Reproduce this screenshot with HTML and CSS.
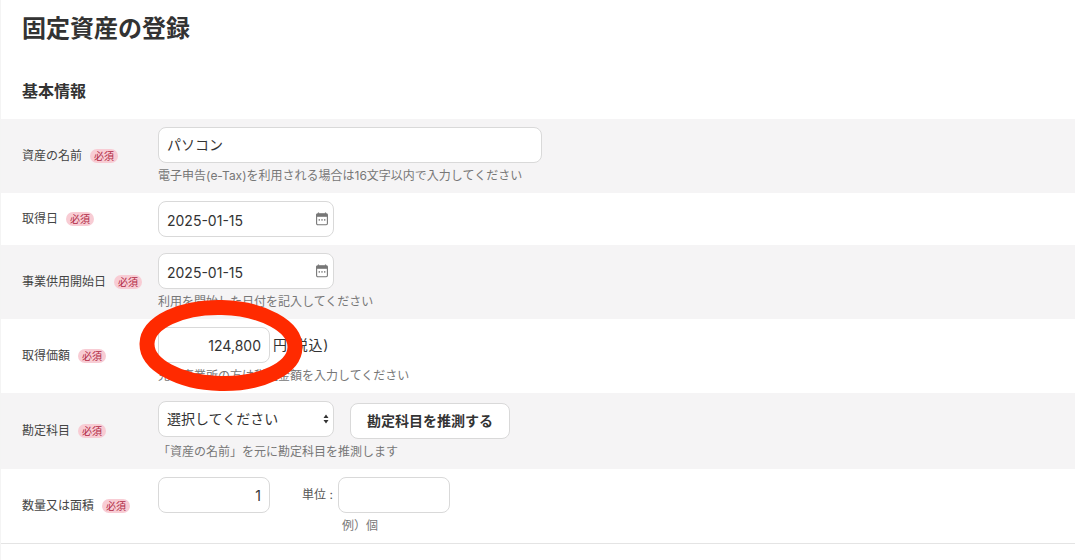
FILE: index.html
```html
<!DOCTYPE html>
<html lang="ja">
<head>
<meta charset="utf-8">
<title>固定資産の登録</title>
<link rel="stylesheet" href="styles.css">
</head>
<body>
<main class="page">
  <h1 class="title">固定資産の登録</h1>
  <h2 class="section">基本情報</h2>
  <form class="form">
    <div class="row shade">
      <div class="label">資産の名前<span class="badge">必須</span></div>
      <div class="field">
        <input class="input wide" type="text" value="パソコン">
        <p class="hint">電子申告(e-Tax)を利用される場合は16文字以内で入力してください</p>
      </div>
    </div>
    <div class="row compact">
      <div class="label">取得日<span class="badge">必須</span></div>
      <div class="field">
        <div class="date">
          <input class="input medium date-input" type="text" value="2025-01-15">
          <svg class="cal" viewBox="0 0 12 14" width="12" height="14"><path d="M2.5 0.5v2M9.5 0.5v2" stroke="#777" stroke-width="1.2" fill="none"/><rect x="0.6" y="1.8" width="10.8" height="11" rx="1.2" fill="#fff" stroke="#777" stroke-width="1.1"/><rect x="0.6" y="1.8" width="10.8" height="3" fill="#777"/><rect x="2.6" y="7.2" width="1.4" height="1.4" fill="#777"/><rect x="5.3" y="7.2" width="1.4" height="1.4" fill="#777"/><rect x="8" y="7.2" width="1.4" height="1.4" fill="#777"/></svg>
        </div>
      </div>
    </div>
    <div class="row shade">
      <div class="label">事業供用開始日<span class="badge">必須</span></div>
      <div class="field">
        <div class="date">
          <input class="input medium date-input" type="text" value="2025-01-15">
          <svg class="cal" viewBox="0 0 12 14" width="12" height="14"><path d="M2.5 0.5v2M9.5 0.5v2" stroke="#777" stroke-width="1.2" fill="none"/><rect x="0.6" y="1.8" width="10.8" height="11" rx="1.2" fill="#fff" stroke="#777" stroke-width="1.1"/><rect x="0.6" y="1.8" width="10.8" height="3" fill="#777"/><rect x="2.6" y="7.2" width="1.4" height="1.4" fill="#777"/><rect x="5.3" y="7.2" width="1.4" height="1.4" fill="#777"/><rect x="8" y="7.2" width="1.4" height="1.4" fill="#777"/></svg>
        </div>
        <p class="hint">利用を開始した日付を記入してください</p>
      </div>
    </div>
    <div class="row">
      <div class="label">取得価額<span class="badge">必須</span></div>
      <div class="field">
        <div class="inline">
          <input class="input small num" type="text" value="124,800">
          <span class="unit">円(税込)</span>
        </div>
        <p class="hint">免税事業所の方は税込金額を入力してください</p>
      </div>
    </div>
    <div class="row shade">
      <div class="label">勘定科目<span class="badge">必須</span></div>
      <div class="field">
        <div class="inline top">
          <div class="select-wrap">
            <select class="input medium select"><option>選択してください</option></select>
            <svg class="arrows" viewBox="0 0 6 10" width="6" height="10"><path d="M3 0.5L5.5 4H0.5zM3 9.5L0.5 6H5.5z" fill="#333"/></svg>
          </div>
          <button class="button" type="button">勘定科目を推測する</button>
        </div>
        <p class="hint">「資産の名前」を元に勘定科目を推測します</p>
      </div>
    </div>
    <div class="row ruled">
      <div class="label">数量又は面積<span class="badge">必須</span></div>
      <div class="field pair">
        <input class="input small num" type="text" value="1">
        <div class="unit-block">
          <div class="inline">
            <span class="unit-label">単位 :</span>
            <input class="input small" type="text">
          </div>
          <p class="hint indent">例）個</p>
        </div>
      </div>
    </div>
  </form>
  <svg class="circle" viewBox="0 0 170 97" width="170" height="97"><ellipse cx="85" cy="48.5" rx="74" ry="38" fill="none" stroke="#ff2a00" stroke-width="15" transform="rotate(1.5 85 48.5)"/></svg>
</main>
</body>
</html>
```

FILE: styles.css
```css
* { box-sizing: border-box; }

html, body { margin: 0; padding: 0; background: #fff; }

body {
  font-family: Inter, "Noto Sans CJK JP", sans-serif;
  color: #333;
  height: 560px;
  overflow: hidden;
}

.page { position: relative; border-left: 1px solid #f4f4f4; min-height: 560px; }

.title {
  margin: 0;
  padding: 11px 0 0 21px;
  font-size: 24px;
  line-height: 36px;
  font-weight: 700;
  color: #333;
}

.section {
  margin: 0;
  padding: 32px 0 0 21px;
  font-size: 16px;
  line-height: 24px;
  height: 72px;
  font-weight: 700;
  color: #333;
}

.row {
  display: flex;
  align-items: center;
  padding: 8px 0 8px 21px;
}

.shade { background: #f5f4f5; }
.compact { min-height: 52px; }
.ruled { border-bottom: 1px solid #e4e4e4; }

.label {
  width: 136px;
  flex: none;
  display: flex;
  align-items: center;
  font-size: 12px;
  line-height: 18px;
  color: #444;
}

.badge {
  display: inline-block;
  width: 28px;
  height: 14px;
  margin-left: 8px;
  border-radius: 7px;
  background: #f8ccd4;
  color: #b02a45;
  font-size: 10px;
  line-height: 14px;
  text-align: center;
}

.field { flex: none; }

.input {
  display: block;
  height: 36px;
  padding: 0 8px;
  border: 1px solid #d9d9d9;
  border-radius: 8px;
  background: #fff;
  color: #333;
  font: 14px/20px Inter, "Noto Sans CJK JP", sans-serif;
  outline: none;
}

.wide { width: 384px; padding-bottom: 2px; }
.medium { width: 176px; }
.small { width: 112px; }
.num { text-align: right; }
.date-input { padding-top: 2px; }

.date, .select-wrap { position: relative; width: 176px; }

.cal { position: absolute; right: 6px; top: 11px; }

.select { appearance: none; -webkit-appearance: none; }

.arrows { position: absolute; right: 5px; top: 13px; }

.inline { display: flex; align-items: center; }
.top { align-items: flex-start; }

.unit { margin-left: 3px; font-size: 14px; line-height: 18px; letter-spacing: 0.8px; color: #333; }

.button {
  height: 36px;
  width: 160px;
  margin: 2px 0 0 16px;
  padding: 0;
  border: 1px solid #d9d9d9;
  border-radius: 8px;
  background: #fff;
  color: #333;
  font: 700 14px/20px Inter, "Noto Sans CJK JP", sans-serif;
}

.hint {
  margin: 4px 0 0;
  font-size: 12px;
  line-height: 18px;
  color: #777;
}

.pair { display: flex; align-items: flex-start; }

.unit-block { margin-left: 32px; }

.unit-label { width: 36px; font-size: 12px; line-height: 18px; color: #555; }

.indent { padding-left: 40px; }

.circle { position: absolute; left: 135px; top: 297px; pointer-events: none; }
```
